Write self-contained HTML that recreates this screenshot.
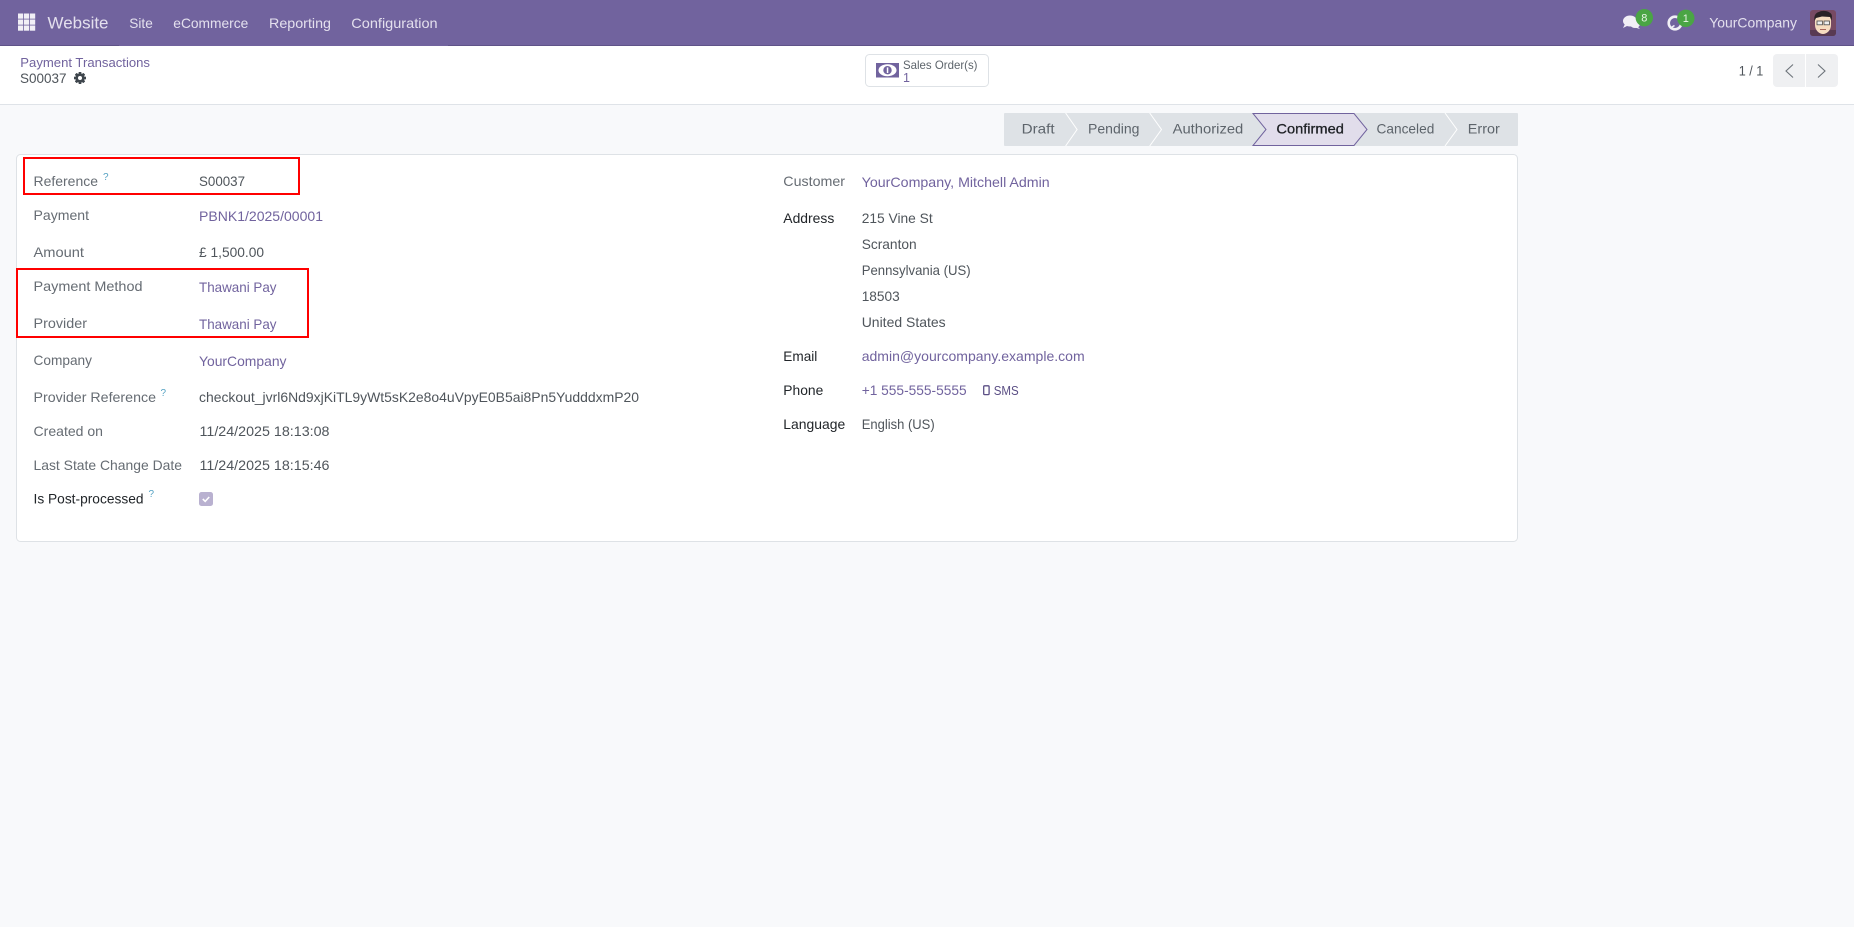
<!DOCTYPE html>
<html lang="en">
<head>
<meta charset="utf-8">
<title>S00037 - Payment Transactions</title>
<style>
html,body{margin:0;padding:0;width:1854px;height:927px;overflow:hidden;background:#f8f9fb;}
svg{display:block;position:absolute;left:0;top:0;}
text{font-family:"Liberation Sans",sans-serif;font-size:14px;white-space:pre;}
.n{fill:#e4e0ee;}
.l{fill:#666c73;}
.v{fill:#4f555b;}
.a{fill:#71639e;}
.b{fill:#212529;}
.s{fill:#5d646b;}
.q{fill:#57a3c4;font-size:10px;}
</style>
</head>
<body>
<svg width="1854" height="927" viewBox="0 0 1854 927" xmlns="http://www.w3.org/2000/svg">
<rect width="1854" height="927" fill="#f8f9fb"/>
<!-- navbar -->
<rect width="1854" height="46" fill="#71639e"/>
<rect y="45" width="119" height="1" fill="#5f5388"/>
<rect x="448" y="45" width="1406" height="1" fill="#5f5388"/>
<g fill="#f1eff6">
<rect x="18" y="13.500" width="5.200" height="5.200"/><rect x="24" y="13.500" width="5.200" height="5.200"/><rect x="30" y="13.500" width="5.200" height="5.200"/>
<rect x="18" y="19.500" width="5.200" height="5.200"/><rect x="24" y="19.500" width="5.200" height="5.200"/><rect x="30" y="19.500" width="5.200" height="5.200"/>
<rect x="18" y="25.500" width="5.200" height="5.200"/><rect x="24" y="25.500" width="5.200" height="5.200"/><rect x="30" y="25.500" width="5.200" height="5.200"/>
</g>
<text class="n" x="47.500" y="28.700" style="font-size:16.500px" textLength="61" lengthAdjust="spacingAndGlyphs">Website</text>
<text class="n" x="129.300" y="28" textLength="23.500" lengthAdjust="spacingAndGlyphs">Site</text>
<text class="n" x="173.300" y="28" textLength="75" lengthAdjust="spacingAndGlyphs">eCommerce</text>
<text class="n" x="269" y="28" textLength="62" lengthAdjust="spacingAndGlyphs">Reporting</text>
<text class="n" x="351.300" y="28" textLength="86.300" lengthAdjust="spacingAndGlyphs">Configuration</text>
<!-- systray: chat -->
<g fill="#f1eff6">
<ellipse cx="1630" cy="21" rx="7" ry="5.500"/>
<path d="M1625 24l-2 4 5-2.500z"/>
<ellipse cx="1635" cy="24" rx="5" ry="4"/>
<path d="M1637 26l3 3-5-1.500z"/>
</g>
<circle cx="1644.300" cy="17.700" r="8.700" fill="#4aa544"/>
<text x="1644.300" y="21.500" style="font-size:11px;fill:#e8f5e6" text-anchor="middle">8</text>
<!-- systray: activity clock -->
<circle cx="1675" cy="23" r="6.300" fill="none" stroke="#f1eff6" stroke-width="2.600"/>
<path d="M1674.500 25.500l-2.500 1.500" fill="none" stroke="#f1eff6" stroke-width="1.600"/>
<circle cx="1685.800" cy="18.300" r="8.700" fill="#4aa544"/>
<text x="1685.800" y="22" style="font-size:11px;fill:#e8f5e6" text-anchor="middle">1</text>
<text class="n" x="1709.300" y="27.500" textLength="87.700" lengthAdjust="spacingAndGlyphs">YourCompany</text>
<!-- avatar -->
<rect x="1810" y="10" width="26" height="26" rx="3" fill="#774a63"/>
<path d="M1810 30h26v3a3 3 0 0 1-3 3h-20a3 3 0 0 1-3-3z" fill="#583a52"/>
<path d="M1815 20c0-4 3.500-6 8-6s8 2 8 6v5c0 5.500-4.500 9-8 9s-8-3.500-8-9z" fill="#f6dcc0"/>
<path d="M1814.500 21c-1-5.500 1.500-8.500 4.500-9 2-1.500 8-1.500 10.500.5 2.500 1 3 4 2 8l-1.500-3.500-8-.5-6 1.500z" fill="#2a2226"/>
<rect x="1817" y="21" width="5.400" height="3.800" fill="#eeeeee" stroke="#4a4a4a" stroke-width=".8"/>
<rect x="1824" y="21" width="5.400" height="3.800" fill="#eeeeee" stroke="#4a4a4a" stroke-width=".8"/>
<path d="M1820 29.500h6" stroke="#a9655a" stroke-width="1"/>
<!-- control panel -->
<rect y="46" width="1854" height="58" fill="#fff"/>
<rect y="104" width="1854" height="1" fill="#dfe3e8"/>
<text class="a" x="20.300" y="67" style="font-size:13px" textLength="129.700" lengthAdjust="spacingAndGlyphs">Payment Transactions</text>
<text class="v" x="20" y="83" textLength="46.500" lengthAdjust="spacingAndGlyphs">S00037</text>
<!-- gear -->
<g transform="translate(80 78)">
<g fill="#3f464d">
<rect x="-1.400" y="-6" width="2.800" height="12" rx=".5"/>
<rect x="-1.400" y="-6" width="2.800" height="12" rx=".5" transform="rotate(45)"/>
<rect x="-1.400" y="-6" width="2.800" height="12" rx=".5" transform="rotate(90)"/>
<rect x="-1.400" y="-6" width="2.800" height="12" rx=".5" transform="rotate(135)"/>
</g>
<circle r="4.600" fill="#3f464d"/>
<circle r="2" fill="#fff"/>
</g>
<!-- sales order button -->
<rect x="865.500" y="54.500" width="123" height="32" rx="4" fill="#fff" stroke="#dee2e6"/>
<rect x="876" y="63" width="23" height="14.500" fill="#71639e"/>
<ellipse cx="887.500" cy="70.200" rx="9" ry="6" fill="#fff"/>
<circle cx="887.500" cy="70.200" r="4.200" fill="#71639e"/>
<rect x="886.800" y="67.400" width="1.500" height="5.600" fill="#fff"/>
<text class="s" x="903" y="69" style="font-size:12px" textLength="74.500" lengthAdjust="spacingAndGlyphs">Sales Order(s)</text>
<text class="a" x="903" y="82" style="font-size:12.500px">1</text>
<!-- pager -->
<text class="v" x="1738.700" y="75.300" textLength="24.600" lengthAdjust="spacingAndGlyphs">1 / 1</text>
<path d="M1773 58a4 4 0 0 1 4-4h28v33h-28a4 4 0 0 1-4-4z" fill="#eff0f2"/>
<path d="M1806 54h28a4 4 0 0 1 4 4v25a4 4 0 0 1-4 4h-28z" fill="#eff0f2"/>
<path d="M1793 64.500l-7 6.500 7 6.500" fill="none" stroke="#6c737a" stroke-width="1.100"/>
<path d="M1818 64.500l7 6.500-7 6.500" fill="none" stroke="#6c737a" stroke-width="1.100"/>
<!-- statusbar -->
<rect x="1004" y="113" width="514" height="33" rx="1" fill="#dee2e6"/>
<g fill="none" stroke="#fff" stroke-width="1">
<path d="M1065.600 113l11.500 16.500-11.500 16.500"/>
<path d="M1149.700 113l11.800 16.500-11.800 16.500"/>
<path d="M1445 113l12 16.500-12 16.500"/>
</g>
<path d="M1253 113.500h101l13 16-13 16h-101l13-16z" fill="#e1ddeb" stroke="#71639e" stroke-width="1"/>
<text class="s" x="1021.600" y="133.600" textLength="33" lengthAdjust="spacingAndGlyphs">Draft</text>
<text class="s" x="1088" y="133.600" textLength="51.500" lengthAdjust="spacingAndGlyphs">Pending</text>
<text class="s" x="1172.600" y="133.600" textLength="70.700" lengthAdjust="spacingAndGlyphs">Authorized</text>
<text x="1276.400" y="133.600" style="fill:#1d2024;stroke:#1d2024;stroke-width:.3" textLength="67.500" lengthAdjust="spacingAndGlyphs">Confirmed</text>
<text class="s" x="1376.500" y="133.600" textLength="57.800" lengthAdjust="spacingAndGlyphs">Canceled</text>
<text class="s" x="1467.800" y="133.600" textLength="32" lengthAdjust="spacingAndGlyphs">Error</text>
<!-- card -->
<rect x="16.500" y="154.500" width="1501" height="387" rx="4" fill="#fff" stroke="#dee2e6"/>
<!-- left column -->
<text class="l" x="33.500" y="186" textLength="64.500" lengthAdjust="spacingAndGlyphs">Reference</text>
<text class="q" x="103" y="180">?</text>
<text class="v" x="199" y="186" textLength="46" lengthAdjust="spacingAndGlyphs">S00037</text>
<text class="l" x="33.500" y="220" textLength="55.500" lengthAdjust="spacingAndGlyphs">Payment</text>
<text class="a" x="199" y="221" textLength="124" lengthAdjust="spacingAndGlyphs">PBNK1/2025/00001</text>
<text class="l" x="33.500" y="257" textLength="50.500" lengthAdjust="spacingAndGlyphs">Amount</text>
<text class="v" x="199" y="257" textLength="65" lengthAdjust="spacingAndGlyphs">£ 1,500.00</text>
<text class="l" x="33.500" y="291" textLength="109" lengthAdjust="spacingAndGlyphs">Payment Method</text>
<text class="a" x="199" y="292" textLength="77.500" lengthAdjust="spacingAndGlyphs">Thawani Pay</text>
<text class="l" x="33.500" y="328" textLength="53.500" lengthAdjust="spacingAndGlyphs">Provider</text>
<text class="a" x="199" y="329" textLength="77.500" lengthAdjust="spacingAndGlyphs">Thawani Pay</text>
<text class="l" x="33.500" y="365" textLength="58.500" lengthAdjust="spacingAndGlyphs">Company</text>
<text class="a" x="199" y="366" textLength="87.500" lengthAdjust="spacingAndGlyphs">YourCompany</text>
<text class="l" x="33.500" y="402" textLength="122.500" lengthAdjust="spacingAndGlyphs">Provider Reference</text>
<text class="q" x="160.500" y="396">?</text>
<text class="v" x="199" y="402" textLength="440" lengthAdjust="spacingAndGlyphs">checkout_jvrl6Nd9xjKiTL9yWt5sK2e8o4uVpyE0B5ai8Pn5YudddxmP20</text>
<text class="l" x="33.500" y="436" textLength="69.500" lengthAdjust="spacingAndGlyphs">Created on</text>
<text class="v" x="199.500" y="436" textLength="130" lengthAdjust="spacingAndGlyphs">11/24/2025 18:13:08</text>
<text class="l" x="33.500" y="470" textLength="148.500" lengthAdjust="spacingAndGlyphs">Last State Change Date</text>
<text class="v" x="199.500" y="470" textLength="130" lengthAdjust="spacingAndGlyphs">11/24/2025 18:15:46</text>
<text class="b" x="33.500" y="503.500" textLength="110" lengthAdjust="spacingAndGlyphs">Is Post-processed</text>
<text class="q" x="148.500" y="497">?</text>
<rect x="199" y="492" width="14" height="14" rx="2.500" fill="#b9b1d0"/>
<path d="M202.800 499l2.400 2.400 4-4.400" fill="none" stroke="#fff" stroke-width="1.600"/>
<!-- right column -->
<text class="l" x="783.300" y="186" textLength="61.700" lengthAdjust="spacingAndGlyphs">Customer</text>
<text class="a" x="861.700" y="187" textLength="188" lengthAdjust="spacingAndGlyphs">YourCompany, Mitchell Admin</text>
<text class="b" x="783.300" y="223" textLength="51" lengthAdjust="spacingAndGlyphs">Address</text>
<text class="v" x="861.700" y="223" textLength="71" lengthAdjust="spacingAndGlyphs">215 Vine St</text>
<text class="v" x="861.700" y="249" textLength="55" lengthAdjust="spacingAndGlyphs">Scranton</text>
<text class="v" x="861.700" y="275" textLength="109" lengthAdjust="spacingAndGlyphs">Pennsylvania (US)</text>
<text class="v" x="861.700" y="301" textLength="38" lengthAdjust="spacingAndGlyphs">18503</text>
<text class="v" x="861.700" y="327" textLength="84" lengthAdjust="spacingAndGlyphs">United States</text>
<text class="b" x="783.300" y="361" textLength="34" lengthAdjust="spacingAndGlyphs">Email</text>
<text class="a" x="861.700" y="361" textLength="223" lengthAdjust="spacingAndGlyphs">admin@yourcompany.example.com</text>
<text class="b" x="783.300" y="395" textLength="40" lengthAdjust="spacingAndGlyphs">Phone</text>
<text class="a" x="861.700" y="395" textLength="105" lengthAdjust="spacingAndGlyphs">+1 555-555-5555</text>
<rect x="983.700" y="385.800" width="5.400" height="8.800" rx="1" fill="none" stroke="#5b4f85" stroke-width="1.300"/>
<text x="993.700" y="395" style="font-size:12.500px;fill:#5b4f85" textLength="25" lengthAdjust="spacingAndGlyphs">SMS</text>
<text class="b" x="783.300" y="429" textLength="62" lengthAdjust="spacingAndGlyphs">Language</text>
<text class="v" x="861.700" y="429" textLength="73" lengthAdjust="spacingAndGlyphs">English (US)</text>
<!-- red annotation boxes -->
<rect x="24" y="158" width="275" height="36" fill="none" stroke="#f00" stroke-width="2"/>
<rect x="17" y="269" width="291" height="68" fill="none" stroke="#f00" stroke-width="2"/>
</svg>
</body>
</html>
